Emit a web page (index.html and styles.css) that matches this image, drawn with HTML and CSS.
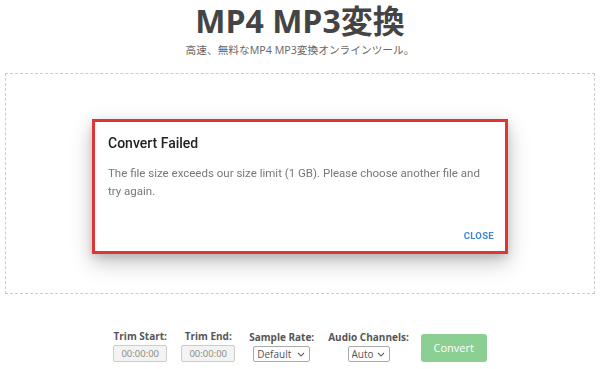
FILE: index.html
```html
<!DOCTYPE html>
<html lang="ja">
<head>
    <meta charset="UTF-8">
    <meta name="viewport" content="width=device-width, initial-scale=1.0">
    <title>MP4 MP3変換</title>
    <link rel="stylesheet" href="styles.css">
</head>
<body>
    <div class="header">
        <h1 class="title">MP4 MP3変換</h1>
        <p class="subtitle">高速、無料なMP4 MP3変換オンラインツール。</p>
    </div>

    <div class="dropArea"></div>

    <div class="controlsRow">
        <div class="controlItem">
            <label for="trimStart">Trim Start:</label>
            <input type="text" id="trimStart" class="timeInput" value="00:00:00" readonly>
        </div>
        <div class="controlItem">
            <label for="trimEnd">Trim End:</label>
            <input type="text" id="trimEnd" class="timeInput" value="00:00:00" readonly>
        </div>
        <div class="controlItem">
            <label for="sampleRate">Sample Rate:</label>
            <span class="selectWrap">
                <select id="sampleRate" class="selectBox sampleSelect">
                    <option>Default</option>
                </select>
                <svg class="chevron" width="8" height="5" viewBox="0 0 8 5"><path d="M1 1 L4 4 L7 1" fill="none" stroke="#666" stroke-width="1.1"/></svg>
            </span>
        </div>
        <div class="controlItem">
            <label for="audioChannels">Audio Channels:</label>
            <span class="selectWrap">
                <select id="audioChannels" class="selectBox channelSelect">
                    <option>Auto</option>
                </select>
                <svg class="chevron" width="8" height="5" viewBox="0 0 8 5"><path d="M1 1 L4 4 L7 1" fill="none" stroke="#666" stroke-width="1.1"/></svg>
            </span>
        </div>
        <button class="convertButton">Convert</button>
    </div>

    <!-- 에러 다이얼로그 -->
    <div class="dialogOverlay">
        <div class="dialog">
            <h2 class="dialogTitle">Convert Failed</h2>
            <p class="dialogText">The file size exceeds our size limit (1 GB). Please choose another file and try again.</p>
            <div class="dialogActions">
                <button class="closeButton">CLOSE</button>
            </div>
        </div>
    </div>
</body>
</html>
```

FILE: styles.css
```css
body {
    margin: 0;
    font-family: "Open Sans", "Noto Sans CJK JP", sans-serif;
    color: #444;
    background: #fff;
}
.header {
    text-align: center;
    padding-top: 2px;
}
.title {
    margin: 0;
    font-size: 32px;
    font-weight: 700;
    line-height: 38px;
    color: #444;
}
.subtitle {
    margin: 2px 0 0 0;
    font-size: 10.7px;
    line-height: 16px;
    color: #666;
}
.dropArea {
    margin: 15px 5px 0 5px;
    height: 219px;
    border: 1px dashed #ccc;
}
.controlsRow {
    display: flex;
    justify-content: center;
    align-items: center;
    gap: 14px;
    margin-top: 35px;
}
.controlItem {
    display: flex;
    flex-direction: column;
    align-items: center;
}
.controlItem label {
    font-size: 10px;
    font-weight: 700;
    color: #555;
    line-height: 14px;
    margin-bottom: 2px;
}
.timeInput {
    width: 46px;
    height: 15px;
    box-sizing: content-box;
    padding: 0 3px;
    font-family: "Open Sans", sans-serif;
    font-size: 9.5px;
    color: #888;
    text-align: center;
    background: #f3f3f3;
    border: 1px solid #ccc;
    border-radius: 2px;
}
.selectWrap {
    position: relative;
    display: flex;
}
.selectBox {
    appearance: none;
    -webkit-appearance: none;
    height: 16px;
    padding: 0 0 0 3px;
    font-family: "Open Sans", sans-serif;
    font-size: 10px;
    line-height: 14px;
    color: #555;
    background: #fff;
    border: 1px solid #aaa;
    border-radius: 2px;
}
.sampleSelect {
    width: 57px;
}
.channelSelect {
    width: 42px;
}
.chevron {
    position: absolute;
    right: 5px;
    top: 6px;
    pointer-events: none;
}
.convertButton {
    width: 66px;
    height: 28px;
    margin: 4px 0 0 -2px;
    border: none;
    border-radius: 3px;
    background: #8ccf93;
    color: #fff;
    font-family: "Open Sans", sans-serif;
    font-size: 11px;
}

.dialogOverlay {
    position: fixed;
    top: 0;
    left: 0;
    right: 0;
    bottom: 0;
    display: flex;
    justify-content: center;
    align-items: center;
    padding-top: 3px;
}
.dialog {
    width: 410px;
    height: 129px;
    box-sizing: content-box;
    border: 3px solid #e03535;
    background: #fff;
    box-shadow: 0 8px 20px rgba(0, 0, 0, 0.25), 0 3px 8px rgba(0, 0, 0, 0.12);
    font-family: Roboto, sans-serif;
    display: flex;
    flex-direction: column;
}
.dialogTitle {
    margin: 0;
    padding: 11px 13px 0 13px;
    font-size: 14px;
    font-weight: 500;
    line-height: 20px;
    color: #222;
}
.dialogText {
    margin: 0;
    padding: 11px 20px 0 13px;
    font-size: 11.5px;
    line-height: 18px;
    color: #777;
}
.dialogActions {
    margin-top: auto;
    display: flex;
    justify-content: flex-end;
    padding: 0 11px 10px 0;
}
.closeButton {
    border: none;
    background: none;
    padding: 0;
    font-family: Roboto, sans-serif;
    font-size: 9.5px;
    font-weight: 700;
    letter-spacing: 0.3px;
    color: #3f86d0;
}
```
